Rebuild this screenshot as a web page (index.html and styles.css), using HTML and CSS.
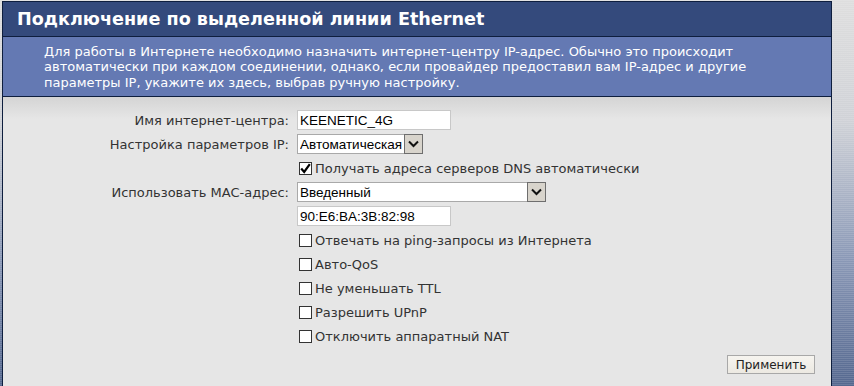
FILE: index.html
```html
<!DOCTYPE html>
<html>
  <head>
    <meta charset="utf-8" />
    <title>Ethernet</title>
    <link rel="stylesheet" href="styles.css">
  </head>
  <body>
    <div class="panel">
      <h1 class="title">Подключение по выделенной линии Ethernet</h1>
      <p class="intro">Для работы в Интернете необходимо назначить интернет-центру IP-адрес. Обычно это происходит<br>
        автоматически при каждом соединении, однако, если провайдер предоставил вам IP-адрес и другие<br>
        параметры IP, укажите их здесь, выбрав ручную настройку.</p>
      <form class="form">
        <label class="lbl" for="name">Имя интернет-центра:</label>
        <div class="field"><input type="text" class="text" id="name" value="KEENETIC_4G"></div>

        <label class="lbl" for="ipmode">Настройка параметров IP:</label>
        <div class="field">
          <span class="combo combo-short">
            <select id="ipmode"><option>Автоматическая</option><option>Ручная</option></select>
            <span class="combo-btn"><svg width="11" height="8" viewBox="0 0 11 8"><path d="M1 1.5 L5.5 6 L10 1.5" fill="none" stroke="#111" stroke-width="2"/></svg></span>
          </span>
        </div>

        <div></div>
        <div class="field"><span class="check on"><svg width="11" height="11" viewBox="0 0 11 11"><path d="M1.2 5.5 L4.2 9 L9.8 1.2" fill="none" stroke="#000" stroke-width="2.2"/></svg></span>Получать адреса серверов DNS автоматически</div>

        <label class="lbl" for="mac">Использовать MAC-адрес:</label>
        <div class="field">
          <span class="combo combo-long">
            <select id="mac"><option>Введенный</option><option>По умолчанию</option></select>
            <span class="combo-btn"><svg width="11" height="8" viewBox="0 0 11 8"><path d="M1 1.5 L5.5 6 L10 1.5" fill="none" stroke="#111" stroke-width="2"/></svg></span>
          </span>
        </div>

        <div></div>
        <div class="field"><input type="text" class="text" value="90:E6:BA:3B:82:98"></div>

        <div></div>
        <div class="field"><span class="check"></span>Отвечать на ping-запросы из Интернета</div>
        <div></div>
        <div class="field"><span class="check"></span>Авто-QoS</div>
        <div></div>
        <div class="field"><span class="check"></span>Не уменьшать TTL</div>
        <div></div>
        <div class="field"><span class="check"></span>Разрешить UPnP</div>
        <div></div>
        <div class="field"><span class="check"></span>Отключить аппаратный NAT</div>
      </form>
      <div class="actions">
        <input type="button" class="apply" value="Применить">
      </div>
    </div>
  </body>
</html>
```

FILE: styles.css
```css
html, body {
  height: 100%;
}
body {
  margin: 0;
  padding: 1px 0 0 2px;
  box-sizing: border-box;
  overflow: hidden;
  font-family: "DejaVu Sans", Verdana, sans-serif;
  background:
    repeating-linear-gradient(rgba(255,255,255,0.12) 0 1px, transparent 1px 2px),
    linear-gradient(#dedede 0, #d0d2d7 120px, #8a98b6 260px, #55688f 386px);
}
.panel {
  width: 828px;
  min-height: 400px;
  border: 1px solid #0e1e3e;
  background: #e6e6e6;
}
.title {
  margin: 0;
  height: 34px;
  padding-left: 14px;
  background: #344a7c;
  border-bottom: 1px solid #0e1e3e;
  color: #fff;
  font-size: 17.6px;
  font-weight: bold;
  line-height: 34px;
}
.intro {
  margin: 0;
  height: 60px;
  padding: 7px 0 0 41px;
  box-sizing: border-box;
  background: #6479b3;
  border-bottom: 1px solid #0e1e3e;
  color: #fff;
  font-size: 13px;
  line-height: 15.3px;
}
.form {
  display: grid;
  grid-template-columns: 286px 1fr;
  grid-auto-rows: 24px;
  column-gap: 8px;
  padding-top: 11px;
  background: linear-gradient(#d4d4d4, #e6e6e6 22px);
}
.lbl {
  align-self: center;
  text-align: right;
  color: #333;
  font-size: 13px;
}
.field {
  display: flex;
  align-items: center;
  color: #333;
  font-size: 13px;
}
.text {
  width: 154px;
  height: 20px;
  box-sizing: border-box;
  margin: 0;
  padding: 0 2px;
  border: 1px solid #c8c8c8;
  background: #fff;
  font: 13.5px "Liberation Sans", Arial, sans-serif;
  color: #000;
}
.combo {
  display: flex;
  height: 20px;
  box-sizing: border-box;
  border: 1px solid #a9a9a9;
  background: #fff;
}
.combo-short {
  width: 126px;
}
.combo-long {
  width: 249px;
}
.combo select {
  flex: 1;
  min-width: 0;
  appearance: none;
  border: none;
  outline: none;
  margin: 0;
  padding: 0 0 0 2px;
  background: #fff;
  font: 13.5px "Liberation Sans", Arial, sans-serif;
  color: #000;
}
.combo-btn {
  width: 17px;
  display: flex;
  align-items: center;
  justify-content: center;
  background: #d8d4cc;
  border: 1px solid #6e6e6e;
  margin: -1px -1px -1px 0;
}
.check {
  width: 13px;
  height: 13px;
  box-sizing: border-box;
  margin: 0 3px 0 2px;
  border: 1px solid #333;
  background: #fff;
  display: flex;
  align-items: center;
  justify-content: center;
}
.actions {
  display: flex;
  justify-content: flex-end;
  padding: 7px 16px 0 0;
}
.apply {
  width: 88px;
  height: 19px;
  border: 1px solid #a8a8a8;
  background: linear-gradient(#f6f4ef, #ece9e2);
  font-family: "DejaVu Sans", Verdana, sans-serif;
  font-size: 12px;
  color: #222;
  padding: 0;
}
```
